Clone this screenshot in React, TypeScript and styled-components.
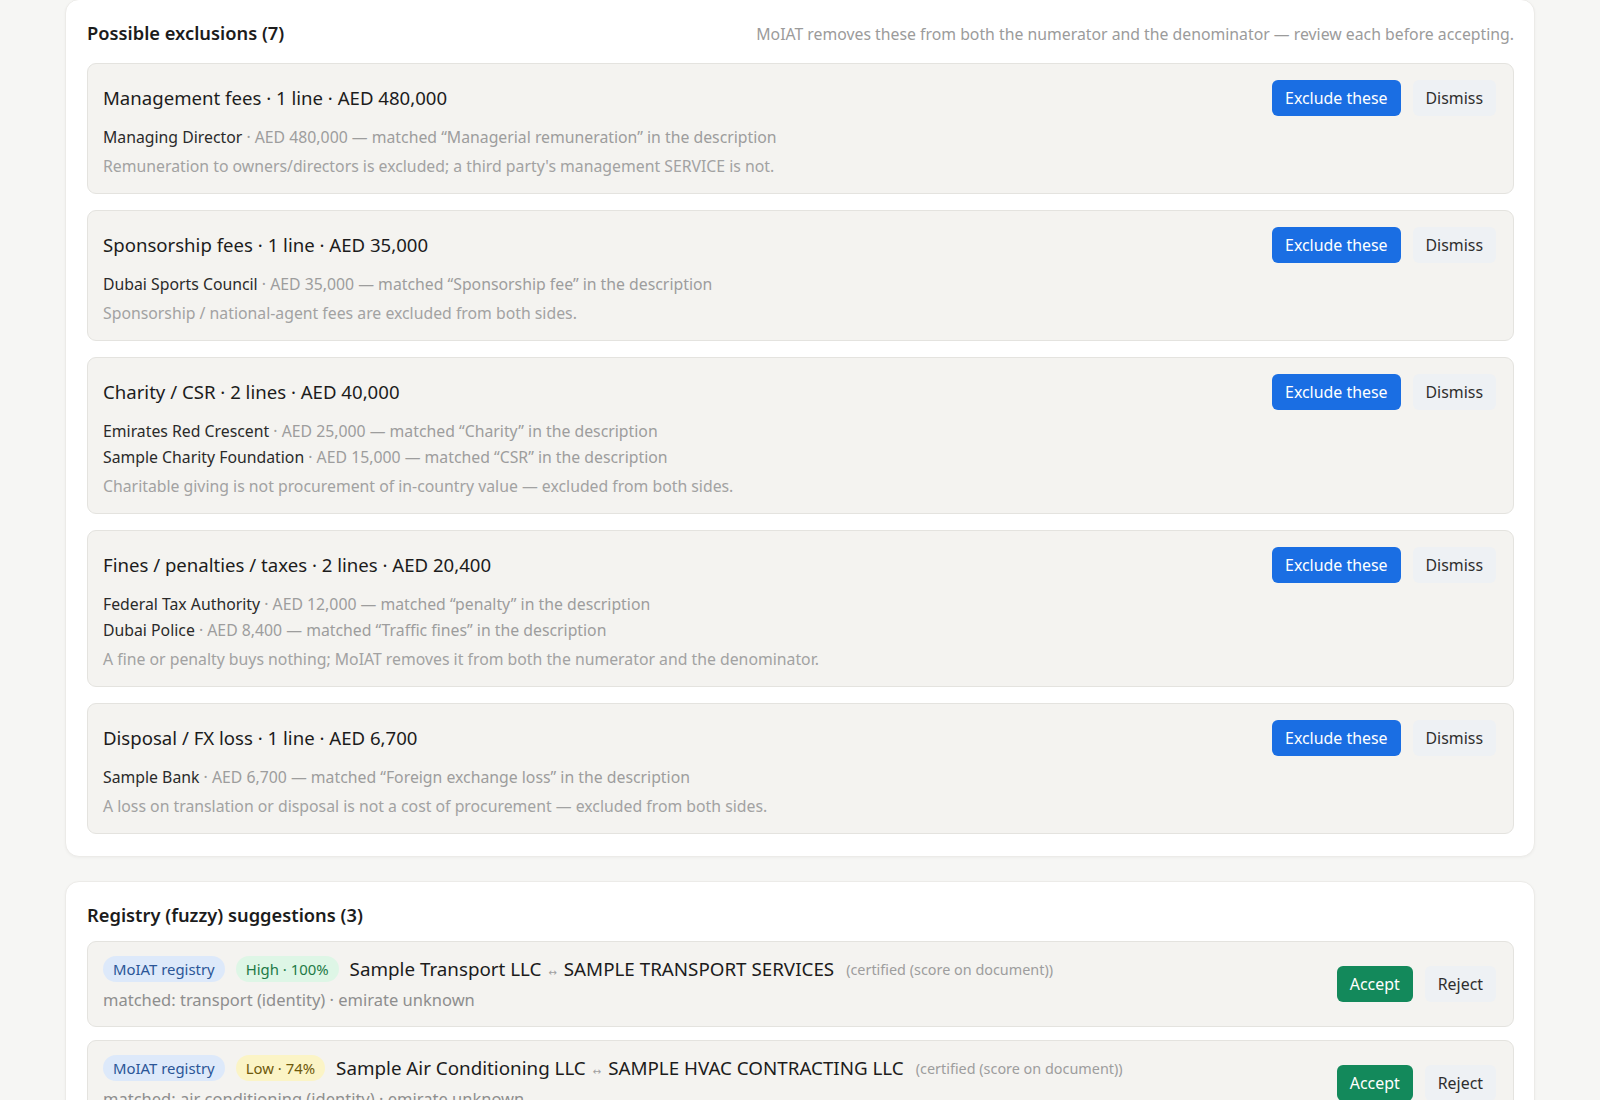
import styled, { createGlobalStyle } from "styled-components";

interface IMatchLine {
  vendor: string;
  amount: string;
  keyword: string;
}

interface IExclusion {
  id: string;
  category: string;
  lines: string;
  total: string;
  matches: IMatchLine[];
  note: string;
}

interface ISuggestion {
  id: string;
  level: "high" | "low";
  score: string;
  vendor: string;
  registryName: string;
  matched: string;
}

const exclusions: IExclusion[] = [
  {
    id: "mgmt",
    category: "Management fees",
    lines: "1 line",
    total: "AED 480,000",
    matches: [
      { vendor: "Managing Director", amount: "AED 480,000", keyword: "Managerial remuneration" },
    ],
    note: "Remuneration to owners/directors is excluded; a third party's management SERVICE is not.",
  },
  {
    id: "sponsor",
    category: "Sponsorship fees",
    lines: "1 line",
    total: "AED 35,000",
    matches: [
      { vendor: "Dubai Sports Council", amount: "AED 35,000", keyword: "Sponsorship fee" },
    ],
    note: "Sponsorship / national-agent fees are excluded from both sides.",
  },
  {
    id: "charity",
    category: "Charity / CSR",
    lines: "2 lines",
    total: "AED 40,000",
    matches: [
      { vendor: "Emirates Red Crescent", amount: "AED 25,000", keyword: "Charity" },
      { vendor: "Sample Charity Foundation", amount: "AED 15,000", keyword: "CSR" },
    ],
    note: "Charitable giving is not procurement of in-country value — excluded from both sides.",
  },
  {
    id: "fines",
    category: "Fines / penalties / taxes",
    lines: "2 lines",
    total: "AED 20,400",
    matches: [
      { vendor: "Federal Tax Authority", amount: "AED 12,000", keyword: "penalty" },
      { vendor: "Dubai Police", amount: "AED 8,400", keyword: "Traffic fines" },
    ],
    note: "A fine or penalty buys nothing; MoIAT removes it from both the numerator and the denominator.",
  },
  {
    id: "fx",
    category: "Disposal / FX loss",
    lines: "1 line",
    total: "AED 6,700",
    matches: [
      { vendor: "Sample Bank", amount: "AED 6,700", keyword: "Foreign exchange loss" },
    ],
    note: "A loss on translation or disposal is not a cost of procurement — excluded from both sides.",
  },
];

const suggestions: ISuggestion[] = [
  {
    id: "transport",
    level: "high",
    score: "High · 100%",
    vendor: "Sample Transport LLC",
    registryName: "SAMPLE TRANSPORT SERVICES",
    matched: "matched: transport (identity) · emirate unknown",
  },
  {
    id: "hvac",
    level: "low",
    score: "Low · 74%",
    vendor: "Sample Air Conditioning LLC",
    registryName: "SAMPLE HVAC CONTRACTING LLC",
    matched: "matched: air conditioning (identity) · emirate unknown",
  },
];

const GlobalStyle = createGlobalStyle`
  * {
    box-sizing: border-box;
  }
  body {
    margin: 0;
    background: #f6f6f4;
    font-family: "Noto Sans", "Open Sans", sans-serif;
    color: #1f1f1f;
  }
`;

const Page = styled.div`
  height: 1100px;
  overflow: hidden;
  padding: 0 65px;
  display: flex;
  flex-direction: column;
  gap: 24px;
`;

const Card = styled.section<{ $first?: boolean }>`
  background: #ffffff;
  border: 1px solid #ecebe8;
  border-radius: 14px;
  box-shadow: 0 1px 3px rgba(0, 0, 0, 0.04);
  padding: 20px 20px 22px 21px;
  margin-top: ${(props) => (props.$first ? "-1px" : "0")};
`;

const CardHeader = styled.div<{ $space: number }>`
  display: flex;
  justify-content: space-between;
  align-items: baseline;
  margin-bottom: ${(props) => props.$space}px;
`;

const CardTitle = styled.h2`
  margin: 0;
  font-size: 18.3px;
  line-height: 26px;
  font-weight: 600;
  color: #1c1c1c;
`;

const CardNote = styled.span`
  font-size: 15.8px;
  color: #9b9b9b;
`;

const List = styled.div<{ $gap: number }>`
  display: flex;
  flex-direction: column;
  gap: ${(props) => props.$gap}px;
`;

const Item = styled.div<{ $align: "flex-start" | "center" }>`
  display: flex;
  align-items: ${(props) => props.$align};
  justify-content: space-between;
  gap: 24px;
  background: #f4f3f0;
  border: 1px solid #e4e3df;
  border-radius: 9px;
`;

const ExclusionItem = styled(Item)`
  padding: 16px 17px 14px 15px;
`;

const SuggestionItem = styled(Item)`
  padding: 14px 17px 14px 15px;
`;

const Body = styled.div`
  min-width: 0;
`;

const ItemTitle = styled.div`
  font-size: 18.6px;
  line-height: 36px;
  color: #1c1c1c;
`;

const MatchLines = styled.div`
  margin-top: 8px;
`;

const MatchLine = styled.div`
  font-size: 15.8px;
  line-height: 26px;
  color: #9d9d9d;
`;

const Vendor = styled.span`
  color: #2a2a2a;
`;

const Reason = styled.div`
  margin-top: 3px;
  font-size: 15.8px;
  line-height: 26px;
  color: #a2a2a2;
`;

const Actions = styled.div`
  display: flex;
  align-items: center;
  gap: 12px;
  flex-shrink: 0;
`;

const Button = styled.button<{ $tone: "blue" | "green" | "plain" }>`
  height: 36px;
  padding: 0 13px;
  border: none;
  border-radius: 6px;
  font-family: inherit;
  font-size: 15.9px;
  cursor: pointer;
  color: ${(props) => (props.$tone === "plain" ? "#2e2e2e" : "#ffffff")};
  background: ${(props) =>
    props.$tone === "blue"
      ? "#1a6ee3"
      : props.$tone === "green"
      ? "#13895b"
      : "#eef1f4"};
`;

const TopRow = styled.div`
  display: flex;
  align-items: center;
  gap: 11px;
  height: 26px;
`;

const Pill = styled.span<{ $kind: "registry" | "high" | "low" }>`
  display: inline-flex;
  align-items: center;
  height: 26px;
  padding: 0 10px;
  border-radius: 13px;
  font-size: 14.9px;
  white-space: nowrap;
  color: ${(props) =>
    props.$kind === "registry"
      ? "#2b5697"
      : props.$kind === "high"
      ? "#1e7a46"
      : "#6f5a0c"};
  background: ${(props) =>
    props.$kind === "registry"
      ? "#dde9fa"
      : props.$kind === "high"
      ? "#def6e6"
      : "#fbf4c6"};
`;

const Names = styled.span`
  font-size: 18.8px;
  color: #1c1c1c;
  white-space: nowrap;
`;

const Arrow = styled.span`
  font-family: "DejaVu Sans", sans-serif;
  font-size: 10px;
  color: #a0a0a0;
  margin: 0 7px;
`;

const Certified = styled.span`
  font-size: 14.4px;
  color: #9d9d9d;
  margin-left: 1px;
  white-space: nowrap;
`;

const Matched = styled.div`
  margin-top: 6px;
  font-size: 16.5px;
  line-height: 24px;
  color: #8e8e8e;
`;

function App() {
  return (
    <>
      <GlobalStyle />
      <Page>
        <Card $first>
          <CardHeader $space={17}>
            <CardTitle>Possible exclusions (7)</CardTitle>
            <CardNote>
              MoIAT removes these from both the numerator and the denominator —
              review each before accepting.
            </CardNote>
          </CardHeader>
          <List $gap={16}>
            {exclusions.map((group) => (
              <ExclusionItem key={group.id} $align="flex-start">
                <Body>
                  <ItemTitle>
                    {group.category} · {group.lines} · {group.total}
                  </ItemTitle>
                  <MatchLines>
                    {group.matches.map((line) => (
                      <MatchLine key={line.vendor}>
                        <Vendor>{line.vendor}</Vendor> · {line.amount} — matched
                        “{line.keyword}” in the description
                      </MatchLine>
                    ))}
                  </MatchLines>
                  <Reason>{group.note}</Reason>
                </Body>
                <Actions>
                  <Button $tone="blue">Exclude these</Button>
                  <Button $tone="plain">Dismiss</Button>
                </Actions>
              </ExclusionItem>
            ))}
          </List>
        </Card>

        <Card>
          <CardHeader $space={13}>
            <CardTitle>Registry (fuzzy) suggestions (3)</CardTitle>
          </CardHeader>
          <List $gap={13}>
            {suggestions.map((s) => (
              <SuggestionItem key={s.id} $align="center">
                <Body>
                  <TopRow>
                    <Pill $kind="registry">MoIAT registry</Pill>
                    <Pill $kind={s.level}>{s.score}</Pill>
                    <Names>
                      {s.vendor}
                      <Arrow>↔</Arrow>
                      {s.registryName}
                    </Names>
                    <Certified>(certified (score on document))</Certified>
                  </TopRow>
                  <Matched>{s.matched}</Matched>
                </Body>
                <Actions>
                  <Button $tone="green">Accept</Button>
                  <Button $tone="plain">Reject</Button>
                </Actions>
              </SuggestionItem>
            ))}
          </List>
        </Card>
      </Page>
    </>
  );
}

export default App;
